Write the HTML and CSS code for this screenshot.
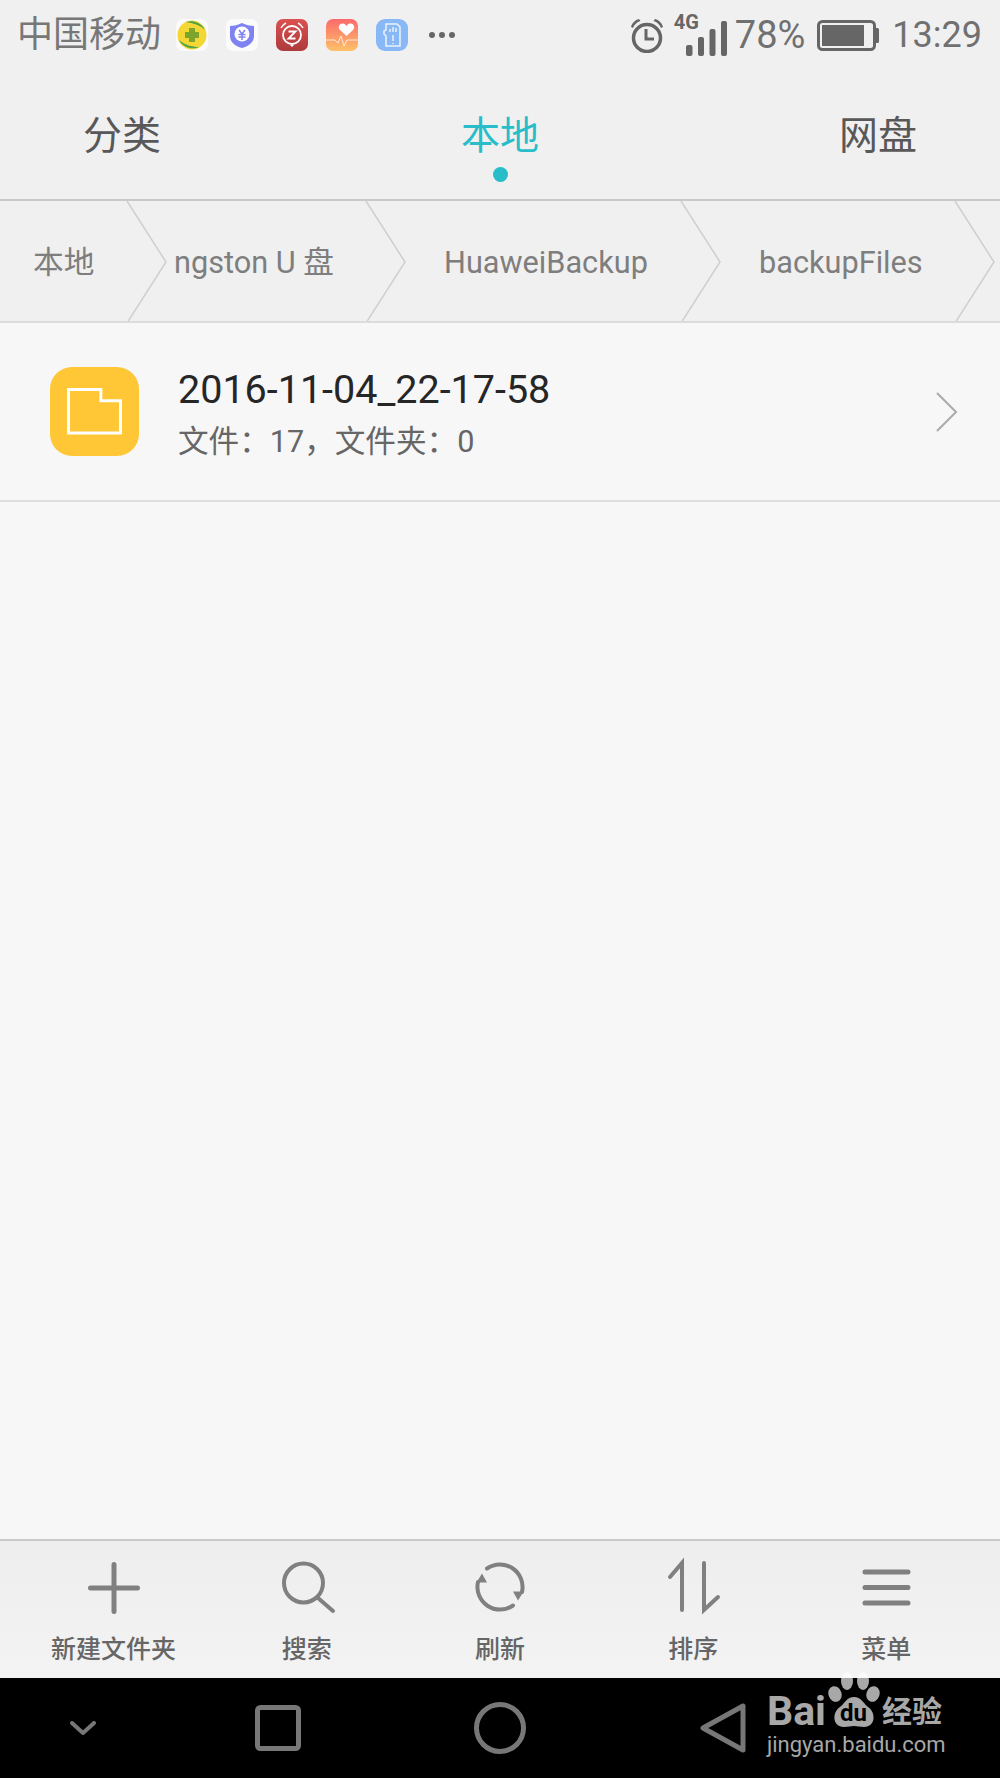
FILE: index.html
```html
<!DOCTYPE html>
<html lang="zh-CN">
<head>
<meta charset="utf-8">
<title>本地</title>
<link rel="stylesheet" href="styles.css">
</head>
<body>
<div class="screen">
  <header class="top">
    <div class="status">
      <span class="carrier">中国移动</span>
      <div class="notifs">
        <svg class="notif" viewBox="0 0 32 32"><rect width="32" height="32" rx="7" fill="#fafafa"/><circle cx="16" cy="16" r="14.500" fill="#f4d734"/><path d="M3 21c4 8 14 10 20 7-7 0-14-2-20-7zM29 11C25 3 16 1 10 3c7 1 14 3 19 8z" fill="#4da24a"/><path d="M13 9h6v4h4v6h-4v4h-6v-4H9v-6h4z" fill="#7da52c"/></svg>
        <svg class="notif" viewBox="0 0 32 32"><rect width="32" height="32" rx="7" fill="#fbfbfb"/><path d="M16 4c4 2 8 3 12 3v10c0 6-5 10-12 12C9 27 4 23 4 17V7c4 0 8-1 12-3z" fill="#7f83f2"/><circle cx="16" cy="15" r="7.500" fill="#fff"/><path d="M13 11l3 4 3-4M12.500 15.500h7M12.500 18h7M16 15v6" stroke="#7f83f2" stroke-width="1.500" fill="none"/></svg>
        <svg class="notif" viewBox="0 0 32 32"><defs><linearGradient id="gr" x1="0" y1="0" x2="0" y2="1"><stop offset="0" stop-color="#dc5050"/><stop offset="1" stop-color="#ad3a3c"/></linearGradient></defs><rect width="32" height="32" rx="7" fill="url(#gr)"/><circle cx="16" cy="16" r="9" fill="none" stroke="#fff" stroke-width="1.800"/><path d="M12.500 12.500h7l-7 7h7" fill="none" stroke="#fff" stroke-width="1.800"/><path d="M5 9c1-2 3-4 5-5M27 9c-1-2-3-4-5-5" fill="none" stroke="#fff" stroke-width="1.500"/><path d="M14 26h4l-2 2z" fill="#fff"/></svg>
        <svg class="notif" viewBox="0 0 32 32"><defs><linearGradient id="or" x1="0" y1="0" x2="0" y2="1"><stop offset="0" stop-color="#fb6a6c"/><stop offset="1" stop-color="#fdc168"/></linearGradient></defs><rect width="32" height="32" rx="7" fill="url(#or)"/><path d="M20.500 17l-6.500-6c-3-3 0-7 3-6.500 1.500 .3 2.500 1.200 3.500 2.500 1-1.300 2-2.200 3.500-2.500 3-.5 6 3.500 3 6.500z" fill="#fff"/><path d="M0 21h9l3 3 3-7 3 10 3-6h11" fill="none" stroke="#fff" stroke-opacity=".75" stroke-width="1"/></svg>
        <svg class="notif" viewBox="0 0 32 32"><rect width="32" height="32" rx="9" fill="#88b8f6"/><path d="M10 5h11l3 3v19H10V17l-2-2v-3l2-1z" fill="none" stroke="#e8f1fd" stroke-width="1.600"/><path d="M14 13v-3M17 13V8M20 13v-4M17 16v6M17 24v1" stroke="#e8f1fd" stroke-width="1.500"/></svg>
        <svg class="more" viewBox="0 0 26 6"><circle cx="3" cy="3" r="3"/><circle cx="13" cy="3" r="3"/><circle cx="23" cy="3" r="3"/></svg>
      </div>
      <div class="sys">
        <svg class="alarm" viewBox="0 0 34 36"><circle cx="17" cy="21" r="13.500" fill="none" stroke="#666" stroke-width="3.500"/><path d="M16 12v10h8" fill="none" stroke="#666" stroke-width="3"/><path d="M1 10C2 6 5 3 9 2l1.500 2C7 5 4 8 3 11zM33 10c-1-4-4-7-8-8l-1.500 2c3.500 1 6.500 4 7.500 7z" fill="#666"/></svg>
        <span class="net"><span class="g4">4G</span>
          <svg class="signal" viewBox="0 0 41 35"><rect x="0" y="24" width="6.500" height="11" rx="2"/><rect x="12" y="16" width="6" height="19" rx="2"/><rect x="23.500" y="8" width="6" height="27" rx="2"/><rect x="35" y="0" width="6" height="35" rx="2"/></svg>
        </span>
        <span class="pct">78%</span>
        <svg class="batt" viewBox="0 0 62 31"><rect x="1.500" y="1.500" width="56" height="28" rx="4" fill="none" stroke="#666" stroke-width="3"/><rect x="5" y="5" width="42" height="21" fill="#666"/><path d="M59 8h1.500a1.500 1.500 0 0 1 1.500 1.500v12a1.500 1.500 0 0 1-1.500 1.500H59z" fill="#666"/></svg>
        <span class="time">13:29</span>
      </div>
    </div>
    <nav class="tabs">
      <span class="tab">分类</span>
      <span class="tab active">本地</span>
      <span class="tab">网盘</span>
    </nav>
  </header>

  <div class="crumbs">
    <div class="crumb c1"><span>本地</span><svg class="tip" viewBox="0 0 42 122" preserveAspectRatio="none"><path d="M1 0l39 61-39 61"/></svg></div>
    <div class="crumb c2"><span>ngston U 盘</span><svg class="tip" viewBox="0 0 42 122" preserveAspectRatio="none"><path d="M1 0l39 61-39 61"/></svg></div>
    <div class="crumb c3"><span>HuaweiBackup</span><svg class="tip" viewBox="0 0 42 122" preserveAspectRatio="none"><path d="M1 0l39 61-39 61"/></svg></div>
    <div class="crumb c4"><span>backupFiles</span><svg class="tip" viewBox="0 0 42 122" preserveAspectRatio="none"><path d="M1 0l39 61-39 61"/></svg></div>
  </div>

  <main class="list">
    <div class="row">
      <div class="folder">
        <svg viewBox="0 0 56 48"><path d="M1.500 1.500h33v11.500h20v33h-53z" fill="none" stroke="#fff" stroke-width="3"/></svg>
      </div>
      <div class="info">
        <div class="name">2016-11-04_22-17-58</div>
        <div class="meta">文件：17，文件夹：0</div>
      </div>
      <svg class="arrow" viewBox="0 0 22 40"><path d="M1 1l19 19L1 39"/></svg>
    </div>
  </main>

  <footer class="tools">
    <div class="tool"><svg viewBox="0 0 60 60"><path d="M30 7.500v47M6.500 31h47"/></svg><span>新建文件夹</span></div>
    <div class="tool"><svg viewBox="0 0 60 60"><circle class="thin" cx="26.500" cy="26" r="19.500"/><path class="thin" d="M41 41l15 13"/></svg><span>搜索</span></div>
    <div class="tool"><svg viewBox="0 0 60 60"><path class="thin" d="M17 11.500A22.600 22.600 0 0 1 52 35M43 48.500A22.600 22.600 0 0 1 8 25"/><path class="solid" d="M12 16.500l5 9H6.500zM48 43.500l-5-9h10.500z"/></svg><span>刷新</span></div>
    <div class="tool"><svg viewBox="0 0 60 60"><path class="thin" d="M19 53V6L7 20M41 6v47l14-13"/></svg><span>排序</span></div>
    <div class="tool"><svg viewBox="0 0 60 60"><path d="M9 15h43M9 30.500h43M9 46h43"/></svg><span>菜单</span></div>
  </footer>

  <div class="nav">
    <svg class="k1" viewBox="0 0 26 14"><path d="M2 2l11 10L24 2"/></svg>
    <svg class="k2" viewBox="0 0 46 46"><rect x="2.500" y="2.500" width="41" height="41" rx="3"/></svg>
    <svg class="k3" viewBox="0 0 52 52"><circle cx="26" cy="26" r="23.500"/></svg>
    <svg class="k4" viewBox="0 0 46 50"><path d="M3 25L43 3v44z"/></svg>
  </div>

  <div class="mark">
    <svg class="paw" viewBox="0 0 52 56">
      <ellipse cx="19" cy="9" rx="6" ry="9"/><ellipse cx="35" cy="9" rx="6" ry="9"/>
      <ellipse cx="7" cy="22" rx="6.500" ry="8" transform="rotate(-20 7 22)"/><ellipse cx="45" cy="22" rx="6.500" ry="8" transform="rotate(20 45 22)"/>
      <path d="M26 25c7 0 9 6 14 10 8 5 8 20-4 20-4 0-7-1-10-1s-6 1-10 1C4 55 4 40 12 35c5-4 7-10 14-10z"/>
    </svg>
    <div class="mark-top"><span class="bai">Bai</span><span class="du">du</span><span class="jy">经验</span></div>
    <div class="url">jingyan.baidu.com</div>
  </div>
</div>
</body>
</html>
```
FILE: styles.css
```css
* { box-sizing: border-box; }
html, body { margin: 0; padding: 0; }
body { font-family: Roboto, "Noto Sans CJK SC", sans-serif; background: #f7f7f7; }
.screen { position: relative; width: 1000px; height: 1778px; display: flex; flex-direction: column; overflow: hidden; background: #f7f7f7; }

.top { height: 201px; background: #f0f0f0; border-bottom: 2px solid #c9c9c9; display: flex; flex-direction: column; }
.status { height: 70px; display: flex; align-items: center; padding: 0 18px 0 17px; color: #707070; }
.carrier { font-size: 36px; line-height: 70px; color: #777; }
.notifs { display: flex; align-items: center; gap: 18px; margin-left: 15px; }
.notif { width: 32px; height: 32px; display: block; }
.more { width: 26px; height: 6px; fill: #666; margin-left: 3px; }
.sys { margin-left: auto; display: flex; align-items: center; }
.alarm { width: 34px; height: 36px; }
.net { position: relative; width: 54px; height: 40px; margin-left: 9px; }
.g4 { position: absolute; left: 1px; top: -4px; font-size: 20px; line-height: 22px; font-weight: 700; color: #666; }
.signal { position: absolute; right: 0; bottom: -1px; width: 41px; height: 35px; fill: #666; }
.pct { font-size: 38px; line-height: 50px; margin-left: 8px; color: #707070; }
.batt { width: 62px; height: 31px; margin-left: 12px; }
.time { font-size: 36px; line-height: 50px; margin-left: 13px; color: #707070; }

.tabs { flex: 1; display: grid; grid-template-columns: 244px 512px 244px; align-items: start; }
.tab { position: relative; text-align: center; font-size: 39px; line-height: 50px; margin-top: 41px; color: #585858; }
.tab.active { color: #28bdc8; }
.tab.active::after { content: ""; position: absolute; left: 50%; top: 56px; width: 15px; height: 15px; margin-left: -7.500px; border-radius: 50%; background: #28bdc8; }

.crumbs { height: 122px; background: #f0f0f0; border-bottom: 2px solid #dcdcdc; display: flex; overflow: hidden; }
.crumb { position: relative; flex: none; height: 120px; display: flex; align-items: center; font-size: 30.700px; color: #7e7e7e; }
.crumb span { white-space: nowrap; position: relative; top: 2px; line-height: 40px; }
.tip { position: absolute; right: 0; top: 0; width: 42px; height: 122px; fill: none; stroke: #cfcfcf; stroke-width: 1.500; overflow: visible; }
.c1 { width: 168px; padding-left: 33px; }
.c2 { width: 239px; padding-left: 6px; }
.c3 { width: 315px; padding-left: 37px; }
.c4 { width: 274px; padding-left: 37px; }

.list { flex: 1; }
.row { height: 179px; border-bottom: 2px solid #dedede; display: flex; align-items: center; padding: 0 42px 0 50px; }
.folder { width: 89px; height: 89px; border-radius: 22px; background: #ffc735; display: flex; align-items: center; justify-content: center; margin-top: -1px; }
.folder svg { width: 55px; height: 47px; display: block; }
.info { margin-left: 39px; flex: 1; padding-top: 4px; }
.name { font-size: 39.500px; line-height: 48px; color: #262626; }
.meta { font-size: 30.600px; line-height: 40px; margin-top: 8px; color: #666; }
.arrow { width: 22px; height: 40px; fill: none; stroke: #aaa; stroke-width: 2; }

.tools { height: 139px; background: linear-gradient(#eeeeee, #f3f3f3); border-top: 2px solid #c9c9c9; display: grid; grid-template-columns: repeat(5, 193.200px); padding: 0 0 0 17px; }
.tool { display: flex; flex-direction: column; align-items: center; color: #666; font-size: 25px; font-weight: 500; }
.tool svg { width: 60px; height: 60px; margin-top: 16px; fill: none; stroke: #808080; stroke-width: 5; stroke-linecap: round; }
.tool .thin { stroke-width: 4; }
.tool .solid { fill: #808080; stroke: none; }
.tool span { line-height: 36px; margin-top: 15px; }

.nav { height: 100px; background: #000; display: grid; grid-template-columns: 166px 224px 220px 226px; align-items: center; justify-items: center; }
.nav svg { fill: none; stroke: #777; stroke-linejoin: round; stroke-linecap: round; }
.k1 { width: 26px; height: 14px; stroke-width: 4; }
.k2 { width: 46px; height: 46px; stroke-width: 5; }
.k3 { width: 52px; height: 52px; stroke-width: 5; }
.k4 { width: 46px; height: 50px; stroke-width: 5; }

.mark { position: absolute; left: 767px; top: 1670px; width: 185px; height: 95px; color: #a8a8a8; }
.paw { position: absolute; left: 61px; top: 2px; width: 52px; height: 56px; fill: #fff; opacity: .66; }
.mark-top { position: relative; height: 60px; }
.bai { position: absolute; left: 0; top: 24px; font-size: 41px; line-height: 34px; font-weight: 700; }
.du { position: absolute; left: 73px; top: 30px; font-size: 24px; line-height: 26px; font-weight: 700; color: #000; }
.jy { position: absolute; left: 115px; top: 27px; font-size: 30px; line-height: 30px; font-weight: 700; white-space: nowrap; }
.url { position: absolute; left: 0; top: 62px; font-size: 22px; line-height: 26px; white-space: nowrap; }
```
